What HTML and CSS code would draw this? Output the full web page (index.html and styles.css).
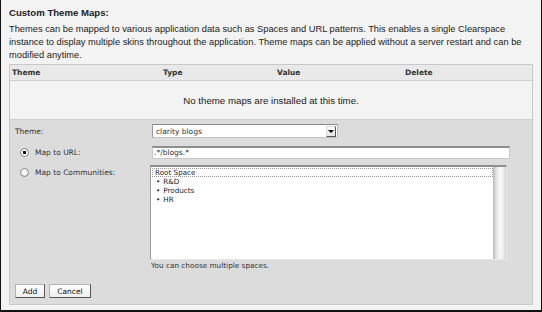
FILE: index.html
```html
<!DOCTYPE html>
<html lang="en">
<head>
    <meta charset="UTF-8">
    <title>Custom Theme Maps</title>
    <link rel="stylesheet" href="styles.css">
</head>
<body>

    <div class="panel">
        <h2 class="title">Custom Theme Maps:</h2>
        <p class="intro">Themes can be mapped to various application data such as Spaces and URL patterns. This enables a single Clearspace instance to display multiple skins throughout the application. Theme maps can be applied without a server restart and can be modified anytime.</p>

        <div class="maps">
            <div class="maps-head">
                <span>Theme</span>
                <span>Type</span>
                <span>Value</span>
                <span>Delete</span>
            </div>
            <div class="maps-empty">No theme maps are installed at this time.</div>

            <form class="map-form">
                <div class="field-row">
                    <label class="field-label">Theme:</label>
                    <div class="select">
                        <span class="select-text">clarity blogs</span>
                        <span class="select-btn"></span>
                    </div>
                </div>

                <div class="field-row url-row">
                    <label class="field-label"><input type="radio" name="maptype" class="radio" checked>Map to URL:</label>
                    <div class="text-input">.*/blogs.*</div>
                </div>

                <div class="field-row comm-row">
                    <label class="field-label"><input type="radio" name="maptype" class="radio">Map to Communities:</label>
                    <div class="listbox">
                        <div class="listbox-body">
                            <div class="root-item">Root Space</div>
                            <ul class="space-list">
                                <li>R&amp;D</li>
                                <li>Products</li>
                                <li>HR</li>
                            </ul>
                        </div>
                        <div class="listbox-track"></div>
                    </div>
                </div>

                <div class="field-row">
                    <span></span>
                    <div class="hint">You can choose multiple spaces.</div>
                </div>

                <div class="actions">
                    <button type="button" class="btn btn-add">Add</button>
                    <button type="button" class="btn btn-cancel">Cancel</button>
                </div>
            </form>
        </div>
    </div>

</body>
</html>
```

FILE: styles.css
```css
body {
    margin: 0;
    font-family: "Liberation Sans", Arial, sans-serif;
    color: #222;
}
.panel {
    width: 542px;
    height: 312px;
    box-sizing: border-box;
    background-color: #f3f3f3;
    border: solid #111;
    border-width: 0 1px 2px 1px;
    padding: 6px 8px 0 8px;
}
.title {
    margin: 0;
    font-size: 9.6px;
    line-height: 13px;
    font-weight: bold;
}
.intro {
    margin: 4px 0 0 0;
    width: 516px;
    font-size: 9.3px;
    line-height: 13px;
}
.maps {
    margin-top: 2px;
    border: 1px solid #c9c9c9;
}
.maps-head {
    display: grid;
    grid-template-columns: 151px 114px 128px 1fr;
    align-items: center;
    height: 15px;
    padding-left: 2px;
    background-color: #e9e9e9;
    border-bottom: 1px solid #cfcfcf;
    font-family: "DejaVu Sans", sans-serif;
    font-size: 7.5px;
    font-weight: bold;
    color: #333;
}
.maps-empty {
    height: 38px;
    display: flex;
    align-items: center;
    justify-content: center;
    font-size: 9.7px;
    border-bottom: 1px solid #cfcfcf;
}
.map-form {
    background-color: #dcdcdc;
    padding: 4px 0 6px 5px;
    font-family: "DejaVu Sans", sans-serif;
    font-size: 7.5px;
    color: #333;
}
.field-row {
    display: grid;
    grid-template-columns: 137px auto;
    align-items: center;
}
.field-label {
    display: flex;
    align-items: center;
}
.url-row {
    margin-top: 8px;
}
.comm-row {
    margin-top: 6px;
    align-items: start;
}
.comm-row .field-label {
    margin-top: 3px;
}
.radio {
    appearance: none;
    -webkit-appearance: none;
    width: 9px;
    height: 9px;
    margin: 0 6px 0 5px;
    border: 1px solid #8c8c8c;
    border-radius: 50%;
    box-sizing: border-box;
    background: radial-gradient(circle at 50% 40%, #fff 0, #fff 30%, #cfcfcf 100%);
}
.radio:checked {
    background: radial-gradient(circle, #111 0, #111 1.5px, #fff 2px, #d6d6d6 100%);
}
.select {
    width: 186px;
    height: 14px;
    box-sizing: border-box;
    display: flex;
    align-items: center;
    background-color: #fff;
    border: 1px solid;
    border-color: #8a8a8a #bdbdbd #c4c4c4 #9a9a9a;
}
.select-text {
    flex: 1;
    padding-left: 3px;
}
.select-btn {
    width: 8px;
    height: 9px;
    margin-right: 1px;
    border: 1px solid;
    border-color: #ddd #555 #555 #ddd;
    background: linear-gradient(#fafafa, #e4e4e4);
    position: relative;
}
.select-btn::after {
    content: "";
    position: absolute;
    left: 1px;
    top: 3px;
    border-left: 3px solid transparent;
    border-right: 3px solid transparent;
    border-top: 3px solid #000;
}
.text-input {
    width: 358px;
    height: 13px;
    box-sizing: border-box;
    background-color: #fff;
    border: 1px solid #c9c9c9;
    border-top: 2px solid #8e8e8e;
    padding-left: 1px;
    line-height: 10px;
}
.listbox {
    width: 357px;
    height: 95px;
    margin-left: -2px;
    box-sizing: border-box;
    display: flex;
    background-color: #fff;
    border: 1px solid #e6e6e6;
    border-top: 2px solid #8e8e8e;
    border-left: 1px solid #9c9c9c;
}
.listbox-body {
    flex: 1;
    font-size: 7.2px;
    color: #222;
}
.root-item {
    margin: 1px 0 0 1px;
    border: 1px dotted #9a9a9a;
    padding-left: 2px;
    line-height: 7px;
}
.space-list {
    list-style: none;
    margin: 0;
    padding: 0 0 0 5px;
}
.space-list li {
    line-height: 9px;
}
.space-list li::before {
    content: "\2022";
    margin-right: 3px;
}
.listbox-track {
    width: 13px;
    background: linear-gradient(to right, #b9b9b9 0, #e2e2e2 25%, #f9f9f9 55%, #ececec 80%, #cfcfcf 100%);
}
.hint {
    margin: 1px 0 0 -1px;
    font-size: 7.3px;
    line-height: 10px;
    color: #333;
}
.actions {
    display: flex;
    gap: 4px;
    margin-top: 13px;
}
.btn {
    height: 14px;
    padding: 0;
    box-sizing: border-box;
    font-family: "DejaVu Sans", sans-serif;
    font-size: 7.5px;
    color: #111;
    background: linear-gradient(#ffffff, #eeeeee);
    border: 1px solid;
    border-color: #b5b5b5 #555 #555 #b5b5b5;
}
.btn-add {
    width: 30px;
}
.btn-cancel {
    width: 42px;
}
```
